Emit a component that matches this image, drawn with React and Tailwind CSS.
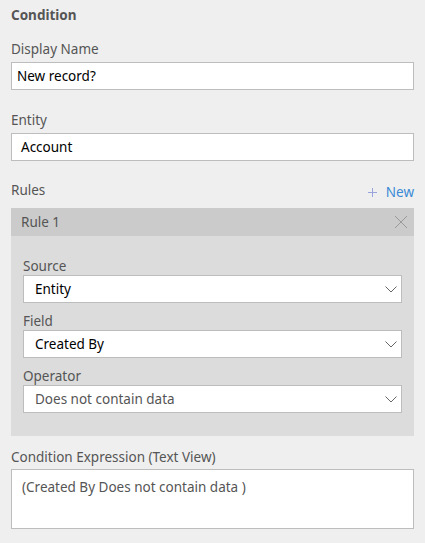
const font = { fontFamily: '"Segoe UI", "Noto Sans", "Liberation Sans", sans-serif' };

function Chevron() {
  return (
    <svg width="12" height="7" viewBox="0 0 12 7" fill="none" stroke="#666" strokeWidth="1">
      <path d="M0.5 0.5 L6 6 L11.5 0.5" />
    </svg>
  );
}

function SelectBox({ value, muted }) {
  return (
    <div className="flex items-center justify-between h-[28px] bg-white border border-[#bdbdbd] pl-[11px] pr-[4px]">
      <span className={`text-[13.5px] ${muted ? "text-[#555]" : "text-black"}`}>{value}</span>
      <Chevron />
    </div>
  );
}

export default function App() {
  return (
    <div className="w-[425px] h-[543px] bg-[#efefef] px-[11px] pt-[6px] overflow-hidden text-[13.5px]" style={font}>
      <div className="font-bold text-[#555] leading-[19px]">Condition</div>

      <div className="mt-[15px] text-[#555] leading-[19px]">Display Name</div>
      <div className="mt-[3px] h-[28px] bg-white border border-[#bdbdbd] flex items-center pl-[5px] text-black">
        New record?
      </div>

      <div className="mt-[21px] text-[#555] leading-[19px]">Entity</div>
      <div className="mt-[3px] h-[28px] bg-white border border-[#bdbdbd] flex items-center pl-[9px] text-black">
        Account
      </div>

      <div className="mt-[20px] h-[19px] flex items-center justify-between leading-[19px]">
        <span className="text-[#555]">Rules</span>
        <span className="flex items-center gap-[9px] text-[#3a8ad6] mt-[3px]">
          <svg width="9" height="9" viewBox="0 0 9 9" stroke="#9aa4dc" strokeWidth="1">
            <path d="M4.5 0 V9 M0 4.5 H9" />
          </svg>
          New
        </span>
      </div>

      <div className="mt-[8px] bg-[#dcdcdc]">
        <div className="h-[28px] bg-[#cbcbcb] flex items-center justify-between pl-[10px] pr-[6px]">
          <span className="text-[#555]">Rule 1</span>
          <svg width="14" height="14" viewBox="0 0 14 14" stroke="#999" strokeWidth="1">
            <path d="M1 1 L13 13 M13 1 L1 13" />
          </svg>
        </div>
        <div className="px-[12px] pt-[21px] pb-[23px]">
          <div className="text-[#555] leading-[18px]">Source</div>
          <SelectBox value="Entity" />
          <div className="mt-[9px] text-[#555] leading-[18px]">Field</div>
          <SelectBox value="Created By" />
          <div className="mt-[9px] text-[#555] leading-[18px]">Operator</div>
          <SelectBox value="Does not contain data" muted />
        </div>
      </div>

      <div className="mt-[12px] text-[#555] leading-[19px]">Condition Expression (Text View)</div>
      <div className="mt-[2px] h-[60px] bg-white border border-[#bdbdbd] pl-[10px] pt-[8px] text-[#555] leading-[19px]">
        (Created By Does not contain data )
      </div>
    </div>
  );
}
